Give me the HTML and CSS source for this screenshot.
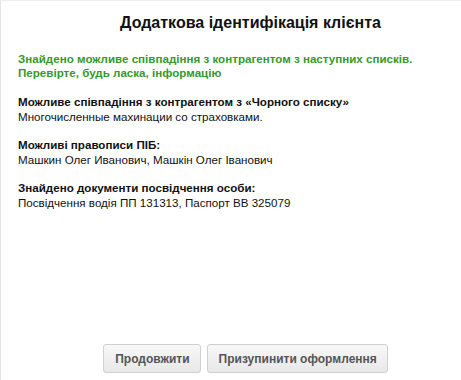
FILE: index.html
```html
<!DOCTYPE html>
<html>
<head>
    <title>Додаткова ідентифікація клієнта</title>
    <link rel="stylesheet" href="styles.css">
</head>
<body>
    <div class="dialog">
        <h1 class="dialog-title">Додаткова ідентифікація клієнта</h1>
        <p class="notice">Знайдено можливе співпадіння з контрагентом з наступних списків.<br>Перевірте, будь ласка, інформацію</p>

        <div class="block">
            <div class="block-title">Можливе співпадіння з контрагентом з «Чорного списку»</div>
            <div class="block-text">Многочисленные махинации со страховками.</div>
        </div>
        <div class="block">
            <div class="block-title">Можливі правописи ПІБ:</div>
            <div class="block-text">Машкин Олег Иванович, Машкін Олег Іванович</div>
        </div>
        <div class="block">
            <div class="block-title">Знайдено документи посвідчення особи:</div>
            <div class="block-text">Посвідчення водія ПП 131313, Паспорт ВВ 325079</div>
        </div>

        <div class="actions">
            <button class="btn">Продовжити</button>
            <button class="btn">Призупинити оформлення</button>
        </div>
    </div>
</body>
</html>
```

FILE: styles.css
```css
body {
    margin: 0;
    font-family: "Liberation Sans", Arial, sans-serif;
    background-color: #fff;
    color: #111;
    overflow: hidden;
}

.dialog {
    height: 380px;
    box-sizing: border-box;
    border-left: 1px solid #e4e4e4;
    border-top: 1px solid #eee;
    padding: 0 12px 0 17px;
    display: flex;
    flex-direction: column;
}

.dialog-title {
    font-size: 16px;
    font-weight: bold;
    text-align: center;
    margin: 12px 0 0 0;
    padding-left: 34px;
    line-height: 20px;
}

.notice {
    color: #35992b;
    font-size: 11.6px;
    font-weight: bold;
    line-height: 14px;
    margin: 19px 0 14px 0;
}

.block {
    font-size: 11.6px;
    line-height: 15px;
    margin-bottom: 13px;
}

.block-title {
    font-weight: bold;
}

.actions {
    margin-top: auto;
    margin-bottom: 7px;
    display: flex;
    justify-content: center;
    gap: 6px;
    padding-left: 24px;
}

.btn {
    font-family: "Liberation Sans", Arial, sans-serif;
    font-size: 12px;
    font-weight: bold;
    color: #555;
    height: 29px;
    padding: 0 10px 0 11px;
    border: 1px solid #d0d0d0;
    border-radius: 3px;
    background: linear-gradient(#f8f8f8, #e8e8e8);
    cursor: pointer;
}
```
